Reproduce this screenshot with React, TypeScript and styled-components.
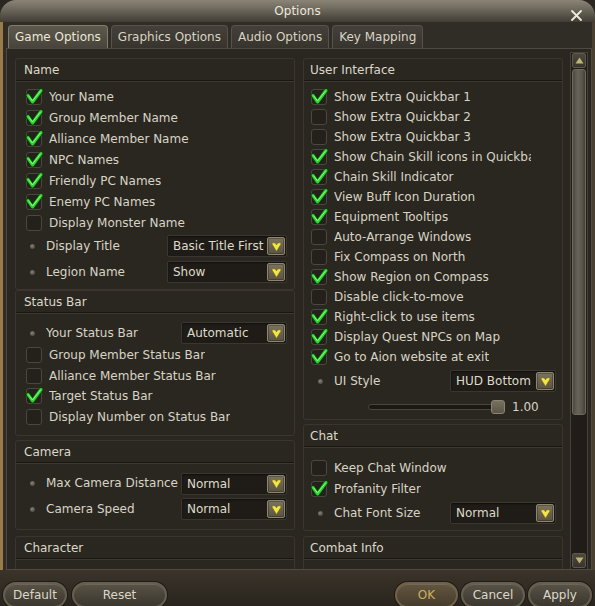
import React from "react";
import styled, { createGlobalStyle } from "styled-components";

const Global = createGlobalStyle`
  html, body { margin: 0; padding: 0; background: #1a1713; }
  body { font-family: "DejaVu Sans", "Liberation Sans", sans-serif; font-size: 12px; color: #d8d4c4; }
  * { box-sizing: border-box; }
`;

const Window = styled.div`
  width: 595px;
  height: 606px;
  display: flex;
  flex-direction: column;
  overflow: hidden;
  background: #2a2620;
`;

const TitleBar = styled.div`
  height: 22px;
  flex: none;
  display: grid;
  grid-template-columns: 1fr auto 1fr;
  align-items: start;
  background: linear-gradient(180deg, #8a8577 0%, #6b665a 45%, #413d35 100%);
  border-radius: 16px 16px 0 0;
  color: #ece8da;
`;

const Title = styled.div`
  grid-column: 2;
  padding-top: 4px;
  line-height: 14px;
`;

const Close = styled.div`
  grid-column: 3;
  justify-self: end;
  padding: 10px 13px 0 0;
  line-height: 0;
`;

const Main = styled.div`
  flex: 1;
  min-height: 0;
  display: flex;
  flex-direction: column;
  border-left: 3px solid #9a7c48;
  border-right: 3px solid #4a4032;
  background: #302c26;
`;

const TabBar = styled.div`
  height: 26px;
  flex: none;
  display: flex;
  align-items: flex-end;
  gap: 3px;
  padding-left: 5px;
`;

const Tab = styled.div<{ $active?: boolean }>`
  height: 23px;
  padding: 0 6px;
  line-height: 22px;
  border: 1px solid ${(p) => (p.$active ? "#827c6c" : "#57534a")};
  border-bottom: none;
  border-radius: 4px 4px 0 0;
  background: ${(p) =>
    p.$active
      ? "linear-gradient(180deg, #5e594d 0%, #48443b 100%)"
      : "linear-gradient(180deg, #45413a 0%, #37332d 100%)"};
  color: ${(p) => (p.$active ? "#ece8d8" : "#d8d4c4")};
  white-space: nowrap;
`;

const Panel = styled.div`
  flex: 1;
  min-height: 0;
  display: flex;
  margin-left: 3px;
  border: 1px solid #4e4a41;
  background: #2a2721;
`;

const Content = styled.div`
  flex: 1;
  min-width: 0;
  overflow: hidden;
  display: flex;
  gap: 8px;
  padding: 9px 0 0 8px;
`;

const Column = styled.div<{ $w: number }>`
  width: ${(p) => p.$w}px;
  flex: none;
  display: flex;
  flex-direction: column;
`;

const Section = styled.div<{ $mt?: number }>`
  flex: none;
  margin-top: ${(p) => p.$mt ?? 0}px;
  border: 1px solid #3a362f;
  border-radius: 3px;
`;

const Header = styled.div<{ $ind: number }>`
  height: 22px;
  padding-left: ${(p) => p.$ind}px;
  display: flex;
  align-items: center;
  color: #dcd8c8;
  border-bottom: 1px solid #181612;
  box-shadow: 0 1px 0 #3d3931;
`;

const Body = styled.div<{ $pt: number; $pb: number }>`
  padding: ${(p) => p.$pt}px 0 ${(p) => p.$pb}px 0;
  display: flex;
  flex-direction: column;
`;

const CheckRow = styled.div<{ $h: number; $ind: number }>`
  height: ${(p) => p.$h}px;
  flex: none;
  padding-left: ${(p) => p.$ind}px;
  display: flex;
  align-items: center;
  gap: 7px;
  white-space: nowrap;
`;

const Label = styled.span<{ $max: number }>`
  color: #d8d4c4;
  white-space: nowrap;
  overflow: hidden;
  max-width: ${(p) => p.$max}px;
`;

const BulletRow = styled.div<{ $h: number; $ind: number; $pr: number }>`
  height: ${(p) => p.$h}px;
  flex: none;
  padding: 0 ${(p) => p.$pr}px 0 ${(p) => p.$ind}px;
  display: flex;
  align-items: center;
`;

const Bullet = styled.span`
  width: 5px;
  height: 5px;
  border-radius: 50%;
  background: radial-gradient(circle at 40% 40%, #8a867a 0%, #55524a 60%, #3a3730 100%);
  margin-right: 11px;
  flex: none;
`;

const BulletLabel = styled.span`
  flex: 1;
  color: #d8d4c4;
  white-space: nowrap;
  margin-top: -1px;
`;

const Select = styled.div<{ $w: number }>`
  width: ${(p) => p.$w}px;
  height: 22px;
  flex: none;
  display: flex;
  align-items: center;
  border: 1px solid #3b3730;
  border-radius: 2px;
  background: #1f1c18;
  box-shadow: inset 0 1px 2px rgba(0, 0, 0, 0.5);
`;

const SelectText = styled.span`
  flex: 1;
  padding-left: 5px;
  color: #dedac9;
  white-space: nowrap;
  overflow: hidden;
`;

const ArrowBtn = styled.span`
  width: 18px;
  height: 18px;
  margin-right: 1px;
  flex: none;
  display: flex;
  align-items: center;
  justify-content: center;
  border: 1px solid #8d856d;
  border-radius: 2px;
  background: linear-gradient(180deg, #7b735d 0%, #5b5442 100%);
  box-shadow: inset 0 0 0 1px rgba(0, 0, 0, 0.25);
`;

const SliderRow = styled.div<{ $h: number }>`
  height: ${(p) => p.$h}px;
  flex: none;
  padding-left: 64px;
  display: flex;
  align-items: center;
`;

const SliderBox = styled.div`
  width: 137px;
  height: 14px;
  position: relative;
  display: flex;
  align-items: center;
`;

const Groove = styled.div`
  width: 128px;
  height: 6px;
  border: 1px solid #4a463d;
  border-radius: 3px;
  background: #1a1814;
`;

const Thumb = styled.div`
  position: absolute;
  top: 0;
  width: 14px;
  height: 14px;
  border: 1px solid #8a8474;
  border-radius: 3px;
  background: linear-gradient(180deg, #77725f 0%, #5a5546 100%);
`;

const SliderValue = styled.span`
  margin-left: 7px;
  color: #d8d4c4;
`;

const ScrollBar = styled.div`
  width: 18px;
  flex: none;
  margin: 3px 3px 0 7px;
  padding: 0 1px 1px;
  display: flex;
  flex-direction: column;
  border: 1px solid #46423a;
  border-bottom: none;
  background: #201d19;
`;

const ScrollBtn = styled.div`
  height: 15px;
  flex: none;
  display: flex;
  align-items: center;
  justify-content: center;
  border: 1px solid #5e594b;
  border-radius: 2px;
  background: linear-gradient(180deg, #4c483c 0%, #39352d 100%);
`;

const ScrollThumb = styled.div`
  height: 346px;
  flex: none;
  margin-top: 1px;
  border: 1px solid #6f6a5a;
  border-radius: 3px;
  background: linear-gradient(90deg, #4c4940 0%, #67635a 40%, #5d594f 70%, #44413a 100%);
`;

const ScrollSpace = styled.div`
  flex: 1;
`;

const Footer = styled.div`
  height: 36px;
  flex: none;
  display: flex;
  justify-content: space-between;
  padding: 12px 3px 0 3px;
  background: linear-gradient(180deg, #3a342b 0%, #29241d 100%);
`;

const BtnGroup = styled.div<{ $gap: number }>`
  display: flex;
  gap: ${(p) => p.$gap}px;
`;

const Button = styled.div<{ $w: number; $primary?: boolean }>`
  width: ${(p) => p.$w}px;
  height: 26px;
  display: flex;
  align-items: center;
  justify-content: center;
  border: 2px solid ${(p) => (p.$primary ? "#6f6248" : "#665f50")};
  border-radius: 13px;
  background: ${(p) =>
    p.$primary
      ? "linear-gradient(180deg, #62563f 0%, #463c2c 100%)"
      : "linear-gradient(180deg, #585246 0%, #3b372f 100%)"};
  box-shadow: inset 0 1px 0 rgba(255, 255, 255, 0.12), 0 0 0 1px #1e1b16;
  color: ${(p) => (p.$primary ? "#cfae62" : "#dcd8c8")};
`;

const CheckBox = ({ checked }: { checked: boolean }) => (
  <svg width="16" height="16" viewBox="0 0 16 16" style={{ overflow: "visible", flex: "none" }}>
    <rect x="0.5" y="0.5" width="15" height="15" rx="2.5" fill="#24211c" stroke="#4b473e" />
    {checked && (
      <>
        <path d="M2 6.5 L6.5 13 L15 1.5" fill="none" stroke="#0d3f0d" strokeWidth="4.6" strokeLinecap="round" strokeLinejoin="round" />
        <path d="M2 6.5 L6.5 13 L15 1.5" fill="none" stroke="#2ed42e" strokeWidth="3" strokeLinecap="round" strokeLinejoin="round" />
        <path d="M2.6 6.8 L6.5 12 L14.5 2" fill="none" stroke="#a8ffa0" strokeWidth="0.8" strokeLinecap="round" strokeLinejoin="round" />
      </>
    )}
  </svg>
);

const Heart = () => (
  <svg width="11" height="11" viewBox="0 0 10 10">
    <path d="M0.8 2.6 C2.2 0.9 4.2 1.6 5 3.6 C5.8 1.6 7.8 0.9 9.2 2.6 L5 9.4 Z" fill="#f3e548" stroke="#7a6a18" strokeWidth="0.5" />
  </svg>
);

const Tri = ({ up }: { up?: boolean }) => (
  <svg width="9" height="7" viewBox="0 0 9 7">
    <path d={up ? "M4.5 0.5 L8.5 6.5 L0.5 6.5 Z" : "M0.5 0.5 L8.5 0.5 L4.5 6.5 Z"} fill="#bdb573" />
  </svg>
);

type Item =
  | { k: "c"; label: string; on: boolean; h: number }
  | { k: "s"; label: string; value: string; w: number; h: number }
  | { k: "r"; value: number; h: number };

type Sec = { title: string; mt: number; pt: number; pb: number; items: Item[] };

const c = (label: string, on: boolean, h: number): Item => ({ k: "c", label, on, h });
const s = (label: string, value: string, w: number, h: number): Item => ({ k: "s", label, value, w, h });

const leftSections: Sec[] = [
  {
    title: "Name",
    mt: 0,
    pt: 5,
    pb: 4,
    items: [
      c("Your Name", true, 21),
      c("Group Member Name", true, 21),
      c("Alliance Member Name", true, 21),
      c("NPC Names", true, 21),
      c("Friendly PC Names", true, 21),
      c("Enemy PC Names", true, 21),
      c("Display Monster Name", false, 21),
      s("Display Title", "Basic Title First", 120, 26),
      s("Legion Name", "Show", 120, 26),
    ],
  },
  {
    title: "Status Bar",
    mt: 0,
    pt: 8,
    pb: 8,
    items: [
      s("Your Status Bar", "Automatic", 106, 24),
      c("Group Member Status Bar", false, 20.5),
      c("Alliance Member Status Bar", false, 20.5),
      c("Target Status Bar", true, 20.5),
      c("Display Number on Status Bar", false, 20.5),
    ],
  },
  {
    title: "Camera",
    mt: 4,
    pt: 8,
    pb: 7,
    items: [
      s("Max Camera Distance", "Normal", 106, 25),
      s("Camera Speed", "Normal", 106, 26),
    ],
  },
  {
    title: "Character",
    mt: 6,
    pt: 8,
    pb: 4,
    items: [s("", "", 106, 26)],
  },
];

const rightSections: Sec[] = [
  {
    title: "User Interface",
    mt: 0,
    pt: 6,
    pb: 0,
    items: [
      c("Show Extra Quickbar 1", true, 20),
      c("Show Extra Quickbar 2", false, 20),
      c("Show Extra Quickbar 3", false, 20),
      c("Show Chain Skill icons in Quickbar", true, 20),
      c("Chain Skill Indicator", true, 20),
      c("View Buff Icon Duration", true, 20),
      c("Equipment Tooltips", true, 20),
      c("Auto-Arrange Windows", false, 20),
      c("Fix Compass on North", false, 20),
      c("Show Region on Compass", true, 20),
      c("Disable click-to-move", false, 20),
      c("Right-click to use items", true, 20),
      c("Display Quest NPCs on Map", true, 20),
      c("Go to Aion website at exit", true, 20),
      s("UI Style", "HUD Bottom", 106, 28),
      { k: "r", value: 1, h: 24 },
    ],
  },
  {
    title: "Chat",
    mt: 4,
    pt: 10,
    pb: 3,
    items: [
      c("Keep Chat Window", false, 21),
      c("Profanity Filter", true, 21),
      s("Chat Font Size", "Normal", 106, 28),
    ],
  },
  {
    title: "Combat Info",
    mt: 5,
    pt: 9,
    pb: 4,
    items: [c("", false, 21)],
  },
];

const SectionView = ({ sec, side }: { sec: Sec; side: "l" | "r" }) => {
  const hInd = side === "l" ? 8 : 6;
  const cInd = side === "l" ? 10 : 7;
  const bInd = 14;
  const pr = side === "l" ? 7 : 6;
  const max = side === "l" ? 240 : 197;
  return (
    <Section $mt={sec.mt}>
      <Header $ind={hInd}>{sec.title}</Header>
      <Body $pt={sec.pt} $pb={sec.pb}>
        {sec.items.map((it, i) => {
          if (it.k === "c")
            return (
              <CheckRow key={i} $h={it.h} $ind={cInd}>
                <CheckBox checked={it.on} />
                {it.label && <Label $max={max}>{it.label}</Label>}
              </CheckRow>
            );
          if (it.k === "s")
            return (
              <BulletRow key={i} $h={it.h} $ind={bInd} $pr={pr}>
                <Bullet />
                <BulletLabel>{it.label}</BulletLabel>
                <Select $w={it.w}>
                  <SelectText>{it.value}</SelectText>
                  <ArrowBtn>
                    <Heart />
                  </ArrowBtn>
                </Select>
              </BulletRow>
            );
          const left = Math.round(((it.value - 0.5) / 0.5) * 123);
          return (
            <SliderRow key={i} $h={it.h}>
              <SliderBox>
                <Groove />
                <Thumb style={{ left }} />
              </SliderBox>
              <SliderValue>{it.value.toFixed(2)}</SliderValue>
            </SliderRow>
          );
        })}
      </Body>
    </Section>
  );
};

export default function App() {
  return (
    <>
      <Global />
      <Window>
        <TitleBar>
          <Title>Options</Title>
          <Close>
            <svg width="11" height="11" viewBox="0 0 11 11">
              <path d="M1 1 L10 10 M10 1 L1 10" stroke="#efeadb" strokeWidth="1.8" strokeLinecap="round" />
            </svg>
          </Close>
        </TitleBar>
        <Main>
          <TabBar>
            <Tab $active>Game Options</Tab>
            <Tab>Graphics Options</Tab>
            <Tab>Audio Options</Tab>
            <Tab>Key Mapping</Tab>
          </TabBar>
          <Panel>
            <Content>
              <Column $w={280}>
                {leftSections.map((sec) => (
                  <SectionView key={sec.title} sec={sec} side="l" />
                ))}
              </Column>
              <Column $w={260}>
                {rightSections.map((sec) => (
                  <SectionView key={sec.title} sec={sec} side="r" />
                ))}
              </Column>
            </Content>
            <ScrollBar>
              <ScrollBtn>
                <Tri up />
              </ScrollBtn>
              <ScrollThumb />
              <ScrollSpace />
              <ScrollBtn>
                <Tri />
              </ScrollBtn>
            </ScrollBar>
          </Panel>
        </Main>
        <Footer>
          <BtnGroup $gap={5}>
            <Button $w={64}>Default</Button>
            <Button $w={95}>Reset</Button>
          </BtnGroup>
          <BtnGroup $gap={3}>
            <Button $w={63} $primary>OK</Button>
            <Button $w={64}>Cancel</Button>
            <Button $w={64}>Apply</Button>
          </BtnGroup>
        </Footer>
      </Window>
    </>
  );
}
